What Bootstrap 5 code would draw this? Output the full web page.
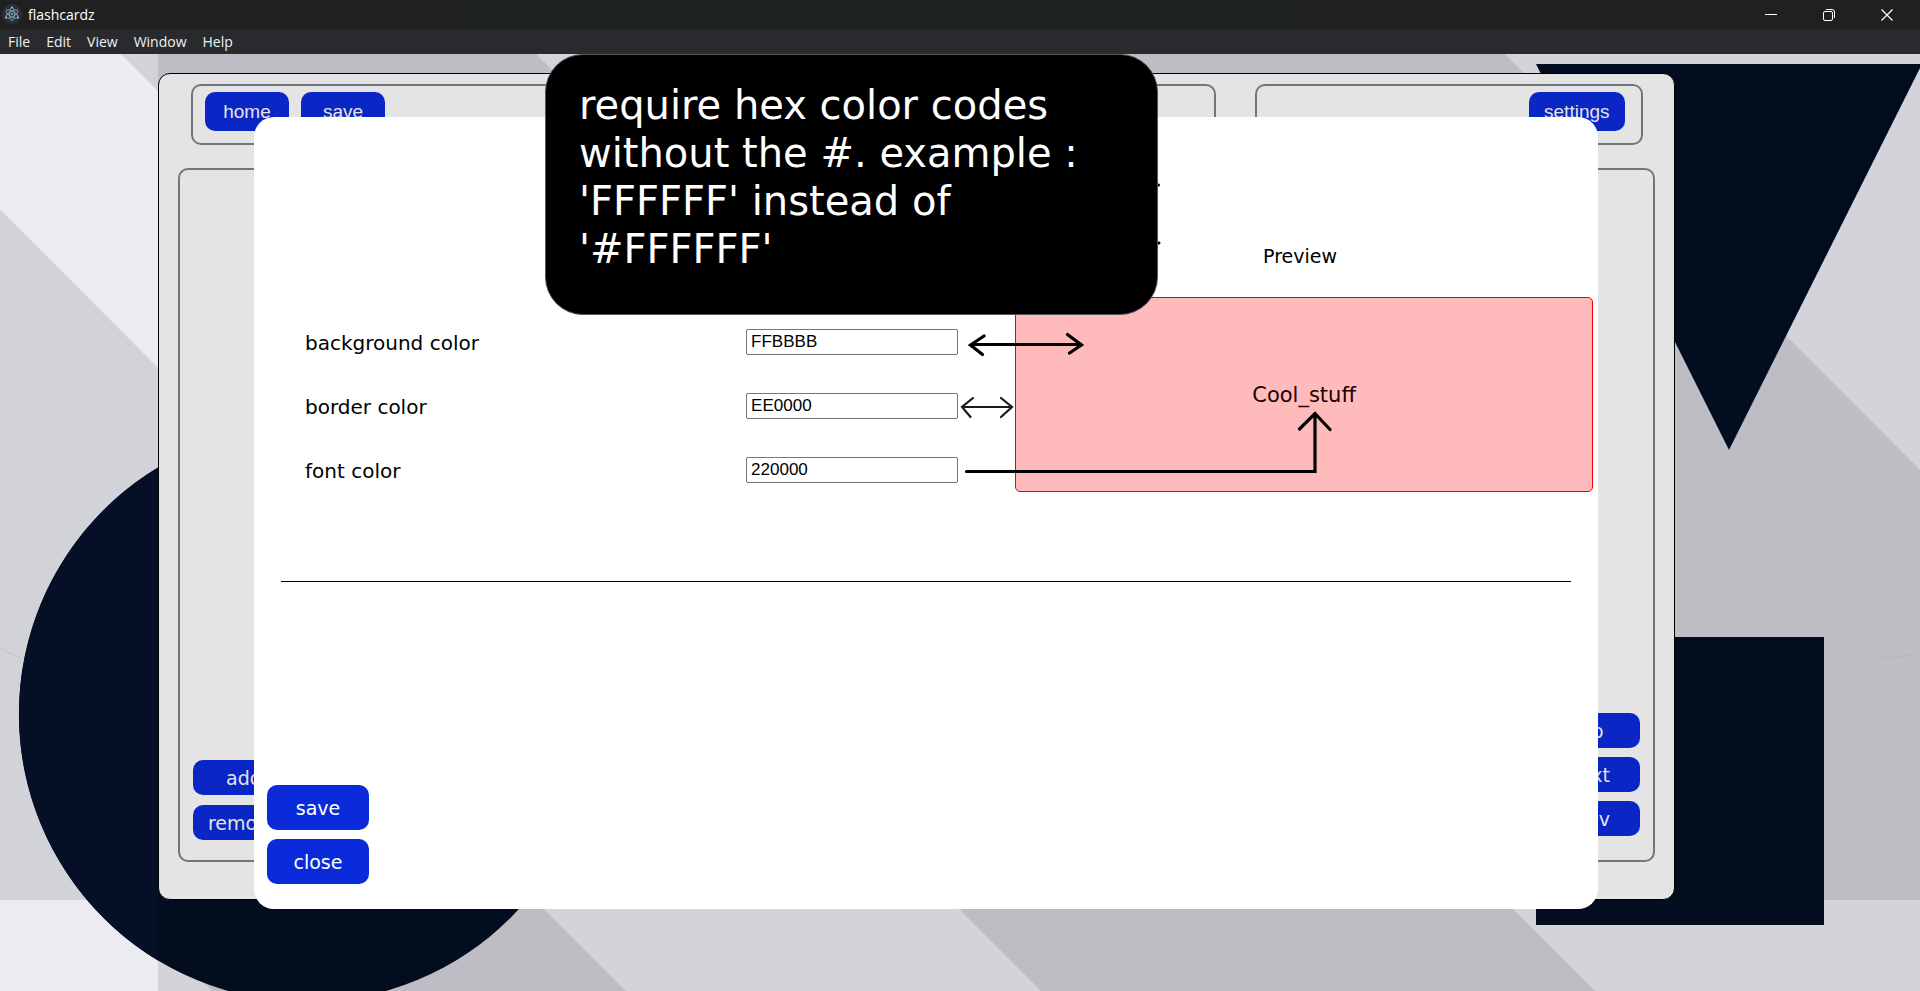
<!DOCTYPE html>
<html lang="en">
<head>
<meta charset="utf-8">
<meta name="viewport" content="width=device-width, initial-scale=1">
<title>flashcardz</title>
<link href="https://cdn.jsdelivr.net/npm/bootstrap@5.3.0/dist/css/bootstrap.min.css" rel="stylesheet">
<style>
  body { font-family: "DejaVu Sans", sans-serif; font-size: 19px; color: #000; }
  .title-bar { height: 29px; background: linear-gradient(90deg, #202020, #1e231f 40%, #1e2221 60%, #202020); }
  .menu-bar { height: 25px; background: #292a2e; }
  .title-bar, .menu-bar { font-family: "Open Sans", sans-serif; font-size: 14px; line-height: 20px; color: #fff; }
  .menu-bar a { color: #f0f0f0; text-decoration: none; }
  .win-btn { width: 58px; height: 29px; padding: 0 0 2px; border: 0; background: none; color: #fff; }
  .backdrop-art { inset: 0; width: 100%; height: 100%; }

  .app-panel { width: 79%; margin: 19px 0 91px 158px; background: #e4e4e4; border: 1px solid #000; border-radius: 12px; }
  .group-box { border: 2px solid #70757f; border-radius: 10px; }
  .tool-row { margin: 10px 31px 0 32px; gap: 39px; }
  .tool-row .group-box { height: 61px; padding: 6px 16px 0 12px; }
  .tools-start { gap: 12px; }
  .tools-end { width: 26.7%; }
  .deck-box { margin: 23px 19px 37px; padding: 0 13px 20px; }
  .stack { gap: 10px; }
  .deck-box .stack-end { gap: 9px; margin-bottom: 4px; }

  .btn-blue { --bs-btn-color: #fff; --bs-btn-bg: #0b2bdb; --bs-btn-hover-color: #fff; --bs-btn-hover-bg: #0921b4;
    width: 102px; height: 45px; padding: 0; border: 0; border-radius: 10px; font-size: 19px; line-height: 24px; }
  .app-panel .btn-blue { --bs-btn-color: #e4e4e4; --bs-btn-bg: #0a26c4; height: 35px; }
  .tool-row .btn-blue { width: 84px; height: 39px; font-family: "Liberation Sans", sans-serif; }
  .tool-row .btn-wide { width: 96px; }

  .settings-sheet { left: 254px; width: 70%; top: 63px; bottom: 82px; background: #fff; border-radius: 20px; }
  .color-form { padding: 193px 57px 0 51px; }
  .color-row { height: 64px; font-size: 20px; }
  .color-row label { padding-top: 2px; }
  .color-row input { width: 212px; height: 26px; padding: 0 4px; border: 1px solid #767676; border-radius: 2px;
    font-family: "Liberation Sans", sans-serif; font-size: 17px; line-height: 20px; color: #000; background: #fff; }
  .preview-col { width: 43%; margin-right: 5px; padding-top: 124px; }
  .preview-title { margin: 0 8px 26px 0; font-size: 19px; line-height: 30px; font-weight: 400; }
  .preview-card { height: 195px; padding-top: 2px; background: #ffbbbb; border: 1px solid #ee0000; border-radius: 5px; color: #220000; font-size: 21px; }
  .sheet-rule { margin: 79px 27px 0; border: 0; border-top: 1px solid #000; opacity: 1; }
  .sheet-actions { gap: 9px; padding: 0 0 25px 13px; }
  .arrows { left: 0; top: 0; pointer-events: none; }

  .hint { left: 545px; top: 0; width: 613px; height: 261px; padding: 26px 33px; background: #000; border: 1px solid #55555a;
    border-radius: 38px; color: #fff; font-size: 40px; line-height: 48px; }
</style>
</head>
<body>
<div class="d-flex flex-column min-vh-100">
  <header class="title-bar d-flex align-items-center">
    <svg class="flex-shrink-0" width="28" height="29" viewBox="0 0 28 29" aria-hidden="true">
      <circle cx="12" cy="14" r="10" fill="#2b2e3b"/>
      <g fill="none" stroke="#7797a2" stroke-width="1">
        <ellipse cx="12" cy="14" rx="6.500" ry="2.600" transform="rotate(30 12 14)"/>
        <ellipse cx="12" cy="14" rx="6.500" ry="2.600" transform="rotate(90 12 14)"/>
        <ellipse cx="12" cy="14" rx="6.500" ry="2.600" transform="rotate(150 12 14)"/>
      </g>
      <g fill="#9ec3ce"><circle cx="12" cy="14" r="1"/><circle cx="12" cy="7.500" r="1"/><circle cx="6" cy="17.500" r="1"/><circle cx="18" cy="17.500" r="1"/></g>
    </svg>
    <span>flashcardz</span>
    <div class="d-flex ms-auto me-1">
      <button class="win-btn" type="button" aria-label="Minimize"><svg width="12" height="12" viewBox="0 0 12 12"><path d="M0 5.500h12" stroke="#fff"/></svg></button>
      <button class="win-btn" type="button" aria-label="Restore"><svg width="12" height="12" viewBox="0 0 12 12" fill="none" stroke="#fff"><rect x=".5" y="2.500" width="9" height="9" rx="1.500"/><path d="M3 .5h6a2.500 2.500 0 0 1 2.500 2.500v6"/></svg></button>
      <button class="win-btn" type="button" aria-label="Close"><svg width="12" height="12" viewBox="0 0 12 12"><path d="M.5.5l11 11M11.500.5l-11 11" stroke="#fff" stroke-width="1.200"/></svg></button>
    </div>
  </header>
  <nav class="menu-bar d-flex align-items-center gap-3 px-2" aria-label="Application menu">
    <a href="#">File</a><a href="#">Edit</a><a href="#">View</a><a href="#">Window</a><a href="#">Help</a>
  </nav>

  <div class="position-relative flex-grow-1 d-flex flex-column overflow-hidden">
    <svg class="backdrop-art position-absolute" viewBox="0 54 1920 937" preserveAspectRatio="xMinYMin slice" aria-hidden="true">
      <rect y="54" width="1920" height="937" fill="#d4d3d9"/>
      <rect y="54" width="158" height="937" fill="#d2d3d8"/>
      <path d="M0 54h121l37 37v277L0 209zM0 900h158v91H0z" fill="#ebecf1"/>
      <path d="M158 54h378l300 300v546H158zM1030 54h475l415 416v430H1030z" fill="#bebdc3"/>
      <path d="M158 900h49v-10h328l91 101H212L158 937z" fill="#bebdc3"/>
      <path d="M158 900v91h54l-54-54z" fill="#d4d3d9"/>
      <path d="M535 900l91 91h415l-91-91z" fill="#d4d3d9"/>
      <path d="M950 900l91 91h554l-91-91z" fill="#bebdc3"/>
      <path d="M0 648q10 6 20 9M1880 658q22 0 40-6" fill="none" stroke="#a8a8ae" opacity=".4"/>
      <circle cx="307" cy="714" r="288" fill="#020d20"/>
      <path d="M158 467.500A288 288 0 0 0 158 960.500z" fill="#051026"/>
      <path d="M1536 64h386l-193 386zM1536 637h288v288h-288z" fill="#020d20"/>
    </svg>

    <main class="app-panel position-relative flex-grow-1 d-flex flex-column">
      <div class="tool-row d-flex">
        <div class="tools-start group-box flex-grow-1 d-flex align-items-start">
          <button class="btn btn-blue" type="button">home</button>
          <button class="btn btn-blue" type="button">save</button>
        </div>
        <div class="tools-end group-box d-flex align-items-start justify-content-end">
          <button class="btn btn-blue btn-wide" type="button">settings</button>
        </div>
      </div>
      <div class="deck-box group-box flex-grow-1 d-flex align-items-end justify-content-between">
        <div class="stack d-flex flex-column">
          <button class="btn btn-blue" type="button">add</button>
          <button class="btn btn-blue" type="button">remove</button>
        </div>
        <div class="stack stack-end d-flex flex-column">
          <button class="btn btn-blue" type="button">flip</button>
          <button class="btn btn-blue" type="button">next</button>
          <button class="btn btn-blue" type="button">prev</button>
        </div>
      </div>
    </main>

    <section class="settings-sheet position-absolute d-flex flex-column" role="dialog" aria-label="Settings">
      <div class="d-flex">
        <form class="color-form flex-grow-1">
          <div class="color-row d-flex align-items-center justify-content-between"><label for="bg">background color</label><input id="bg" type="text" value="FFBBBB"></div>
          <div class="color-row d-flex align-items-center justify-content-between"><label for="bd">border color</label><input id="bd" type="text" value="EE0000"></div>
          <div class="color-row d-flex align-items-center justify-content-between"><label for="fc">font color</label><input id="fc" type="text" value="220000"></div>
        </form>
        <div class="preview-col">
          <h2 class="preview-title text-center">Preview</h2>
          <div class="preview-card d-flex align-items-center justify-content-center">Cool_stuff</div>
        </div>
      </div>
      <hr class="sheet-rule">
      <div class="sheet-actions d-flex flex-column mt-auto">
        <button class="btn btn-blue" type="button">save</button>
        <button class="btn btn-blue" type="button">close</button>
      </div>
      <svg class="arrows position-absolute" width="1344" height="400" viewBox="254 117 1344 400" fill="none" stroke="#000" stroke-linecap="round" aria-hidden="true">
        <path d="M971 344.500H1081M984 336l-13.500 9 12 9.500M1067.500 334.500l14 10.500-12 8" stroke-width="3.200"/>
        <path d="M962 407h49M973 398l-11 9 8.500 10M1001 398l11 9-11 10" stroke="#1a1a1a" stroke-width="2.200"/>
        <path d="M966.500 471.500H1315V413.500M1299.500 429l15.500-15.500 15 16" stroke-width="3.200"/>
        <path d="M1157 185h1.500M1157 243h2" stroke-width="3"/>
      </svg>
    </section>

    <aside class="hint position-absolute" role="note">require hex color codes without the #. example : 'FFFFFF' instead of '#FFFFFF'</aside>
  </div>
</div>
<script src="https://cdn.jsdelivr.net/npm/bootstrap@5.3.0/dist/js/bootstrap.bundle.min.js"></script>
</body>
</html>
